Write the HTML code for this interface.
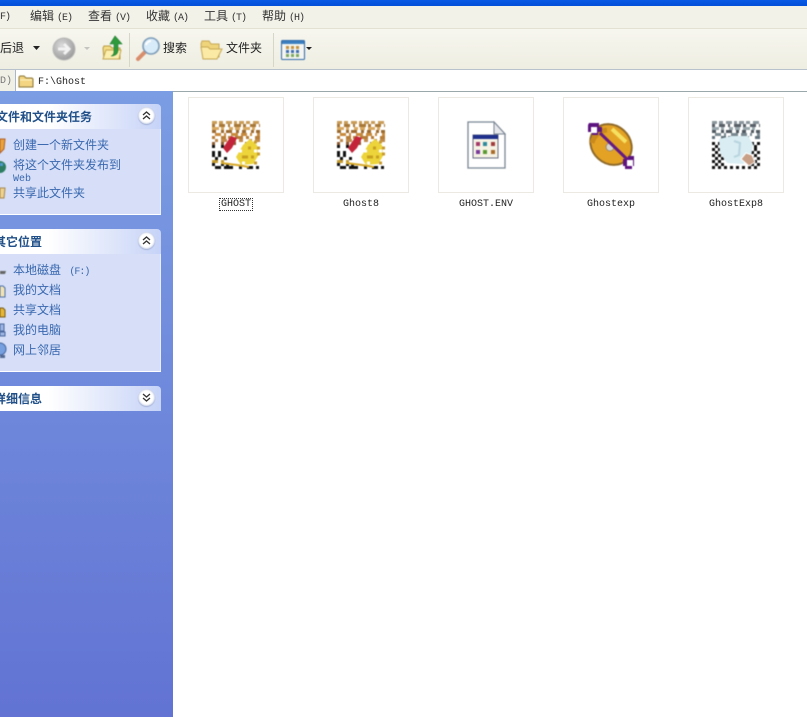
<!DOCTYPE html>
<html lang="zh"><head><meta charset="utf-8"><title>F:\Ghost</title>
<style>
html,body{margin:0;padding:0;width:807px;height:718px;overflow:hidden;background:#fff}
body{position:relative;font:12px/14px "Liberation Sans","Noto Sans CJK SC",sans-serif;color:#222}
.a{position:absolute;white-space:nowrap}
.m{font-family:"Liberation Mono","Noto Sans CJK SC",monospace}
.menu{top:9px;font-size:12px;color:#333}
.menu i{font:10px "Liberation Mono",monospace;margin-left:3px;letter-spacing:-1px}
.tb{top:41px;color:#222}
.panel{position:absolute;left:0;width:161px}
.hd{position:absolute;left:0;width:161px;height:25px;border-radius:0 4px 0 0;background:linear-gradient(90deg,#fff 30%,#c6d3f7)}
.hd span{position:absolute;top:6px;font-weight:bold;font-size:12px;color:#215089;white-space:nowrap}
.bd{position:absolute;left:0;width:160px;background:#d6dff7;border-right:1px solid #e8edfb;border-bottom:1px solid #fff}
.lnk{position:absolute;left:13px;color:#3a68b0;font-size:12px;white-space:nowrap}
.lnk i{font:10px "Liberation Mono",monospace;letter-spacing:-1px}
.btn{position:absolute;left:138px;width:17px;height:17px;border-radius:50%;background:#fff;box-shadow:0 0 2px #8da0cc inset,0 1px 1px #a8b4d8}
.tile{position:absolute;top:97px;width:94px;height:94px;border:1px solid #ece9e2;background:#fff}
.lab{position:absolute;top:198px;width:96px;text-align:center;font:10px/14px "Liberation Mono",monospace;color:#222}
svg{position:absolute;overflow:visible}
svg.s{filter:blur(.4px)}
</style></head><body>

<div class="a" style="left:0;top:0;width:807px;height:6px;background:linear-gradient(#0a5ae6,#0350d8)"></div>
<div class="a" style="left:0;top:6px;width:807px;height:23px;background:#f3f2e8"></div>
<div class="a" style="left:0;top:28px;width:807px;height:1px;background:#e3e1d2"></div>
<div class="a" style="left:0;top:29px;width:807px;height:40px;background:linear-gradient(#f7f6ef,#efeee2)"></div>
<div class="a" style="left:0;top:69px;width:807px;height:1px;background:#b8c2cc"></div>
<div class="a" style="left:0;top:70px;width:15px;height:21px;background:#f1f0e6"></div>
<div class="a" style="left:15px;top:70px;width:792px;height:21px;background:#fff;border-left:1px solid #a9b7c9;box-sizing:border-box"></div>
<div class="a" style="left:173px;top:91px;width:634px;height:1px;background:#9aa8ac"></div>

<div class="a menu m" style="left:0"><i style="margin:0">F)</i></div>
<div class="a menu" style="left:30px">编辑<i>(E)</i></div>
<div class="a menu" style="left:88px">查看<i>(V)</i></div>
<div class="a menu" style="left:146px">收藏<i>(A)</i></div>
<div class="a menu" style="left:204px">工具<i>(T)</i></div>
<div class="a menu" style="left:262px">帮助<i>(H)</i></div>

<div class="a tb" style="left:0">后退</div>
<svg style="left:33px;top:46px" width="8" height="5"><path d="M0 0h7l-3.500 4z" fill="#222"/></svg>
<svg class="s" style="left:52px;top:37px" width="24" height="24" viewBox="0 0 24 24">
<defs><radialGradient id="gb" cx=".4" cy=".35" r=".7"><stop offset="0" stop-color="#dcdcdc"/><stop offset="1" stop-color="#989898"/></radialGradient></defs>
<circle cx="12" cy="12" r="11" fill="url(#gb)" stroke="#b5b5b5"/>
<path d="M6 12h10M12 7l5 5-5 5" fill="none" stroke="#f2f2f2" stroke-width="3"/></svg>
<svg style="left:84px;top:47px" width="7" height="4"><path d="M0 0h6l-3 3z" fill="#c4c4c0"/></svg>
<svg class="s" style="left:101px;top:35px" width="23" height="26" viewBox="0 0 23 26">
<path d="M2 13l1-2h6l2 2h8v11H3z" fill="#f4dc84" stroke="#b79b43"/>
<path d="M2 24l3-9h15l-2 9z" fill="#fbeeae" stroke="#c4a750"/>
<path d="M14 1l7 8h-4v6c0 4-3 6-7 6 3-1 3-3 3-6V9H9z" fill="#2f9a3c" stroke="#1f7a2c" stroke-width=".6"/>
</svg>
<div class="a" style="left:129px;top:33px;width:1px;height:34px;background:#d8d6c6"></div>
<svg class="s" style="left:135px;top:36px" width="26" height="26" viewBox="0 0 26 26">
<path d="M10 16L3 23" stroke="#d88d6c" stroke-width="4" stroke-linecap="round"/>
<circle cx="16" cy="10" r="8" fill="#d8ebf8" stroke="#7d9cb8" stroke-width="1.600"/>
<path d="M11 9a5 5 0 0 1 5-4" stroke="#fff" stroke-width="2" fill="none"/></svg>
<div class="a tb" style="left:163px">搜索</div>
<svg class="s" style="left:199px;top:38px" width="24" height="23" viewBox="0 0 24 23">
<path d="M2 6l1-3h7l2 3h8v13H4z" fill="#f0d47c" stroke="#c6a852"/>
<path d="M4 21L2 9h7l2 2h12l-5 10z" fill="#fbeaa5" stroke="#c6a852"/></svg>
<div class="a tb" style="left:226px">文件夹</div>
<div class="a" style="left:273px;top:33px;width:1px;height:34px;background:#d8d6c6"></div>
<svg class="s" style="left:281px;top:40px" width="24" height="20" viewBox="0 0 24 20">
<rect x=".5" y=".5" width="23" height="19" rx="1" fill="#f4f4f0" stroke="#2d6aa8"/>
<rect x="1" y="1" width="22" height="3" fill="#3c7fc0"/>
<path d="M5 6h3v3H5zM10 6h3v3h-3zM15 6h3v3h-3z" fill="#c8913c"/>
<path d="M5 10h3v3H5zM10 10h3v3h-3zM15 10h3v3h-3z" fill="#3d6cb0"/>
<path d="M5 14h3v3H5zM10 14h3v3h-3zM15 14h3v3h-3z" fill="#7aa860"/></svg>
<svg style="left:306px;top:47px" width="7" height="4"><path d="M0 0h6l-3 3z" fill="#222"/></svg>

<div class="a m" style="left:0;top:75px;font-size:10px;color:#777">D)</div>
<svg class="s" style="left:18px;top:75px" width="16" height="13" viewBox="0 0 16 13">
<path d="M1 12V2l1-1h4l2 2h6l1 1v8z" fill="#f3d582" stroke="#8b7434"/><path d="M2 5h12" stroke="#fff3c4"/></svg>
<div class="a m" style="left:38px;top:76px;font-size:10px;color:#222">F:\Ghost</div>

<div class="a" style="left:0;top:91px;width:173px;height:626px;background:linear-gradient(#7b9de3,#6273d3)"></div>

<div class="hd" style="top:104px"><span style="left:-4px">文件和文件夹任务</span></div>
<div class="bd" style="top:129px;height:85px"></div>
<div class="btn" style="top:107px"></div>
<svg style="left:142px;top:111px" width="9" height="9"><path d="M1 4l3.500-3L8 4M1 8l3.500-3L8 8" fill="none" stroke="#333" stroke-width="1.300"/></svg>
<div class="lnk" style="top:138px">创建一个新文件夹</div>
<div class="lnk" style="top:158px">将这个文件夹发布到</div>
<div class="lnk" style="top:171px;line-height:13px"><i style="letter-spacing:0">Web</i></div>
<div class="lnk" style="top:186px">共享此文件夹</div>
<svg class="s" style="left:0;top:138px" width="6" height="62" viewBox="0 0 6 62">
<path d="M0 1h5l-1 10-4 4z" fill="#e9a43a" stroke="#b45f2a"/>
<circle cx="0" cy="29" r="6" fill="#2c7d62"/><path d="M0 25h3v3H0z" fill="#4f9bd3"/>
<path d="M0 50h5l-1 10H0z" fill="#eed28d" stroke="#a88650"/></svg>

<div class="hd" style="top:229px"><span style="left:-6px">其它位置</span></div>
<div class="bd" style="top:254px;height:117px"></div>
<div class="btn" style="top:232px"></div>
<svg style="left:142px;top:236px" width="9" height="9"><path d="M1 4l3.500-3L8 4M1 8l3.500-3L8 8" fill="none" stroke="#333" stroke-width="1.300"/></svg>
<div class="lnk" style="top:263px">本地磁盘 <i>&nbsp;(F:)</i></div>
<div class="lnk" style="top:283px">我的文档</div>
<div class="lnk" style="top:303px">共享文档</div>
<div class="lnk" style="top:323px">我的电脑</div>
<div class="lnk" style="top:343px">网上邻居</div>
<svg class="s" style="left:0;top:266px" width="6" height="94" viewBox="0 0 6 94">
<path d="M0 5h6l-1 3H0z" fill="#666"/>
<path d="M0 20h3l2 2v9H0z" fill="#f2e3b2" stroke="#4f6ea8"/>
<path d="M0 42h3l2 2v7H0z" fill="#e7b633" stroke="#7a5a18"/>
<path d="M0 58h4v7H0zM0 66h5v4H0z" fill="#9db6e4" stroke="#4a659d"/>
<circle cx="0" cy="83" r="6" fill="#76a0e0" stroke="#44639d"/><path d="M0 89h5v3H0z" fill="#556b96"/></svg>

<div class="hd" style="top:386px"><span style="left:-6px">详细信息</span></div>
<div class="btn" style="top:389px"></div>
<svg style="left:142px;top:393px" width="9" height="9"><path d="M1 1l3.500 3L8 1M1 5l3.500 3L8 5" fill="none" stroke="#333" stroke-width="1.300"/></svg>

<div class="tile" style="left:188px"></div>
<div class="tile" style="left:313px"></div>
<div class="tile" style="left:438px"></div>
<div class="tile" style="left:563px"></div>
<div class="tile" style="left:688px"></div>

<svg width="0" height="0" style="left:0;top:0"><defs>
<g id="gh" fill="none" stroke-width="3">
<path d="M0 1.500h48" stroke="#c99c58" stroke-dasharray="5 2 4 3 6 2 3 2"/>
<path d="M0 4.500h48" stroke="#a87838" stroke-dasharray="3 4 6 3 2 4 7 2"/>
<path d="M0 7.500h48" stroke="#d9a860" stroke-dasharray="7 2 3 5 4 2 5 3"/>
<path d="M0 10.500h48" stroke="#9c6a30" stroke-dasharray="4 5 3 2 6 4 3 3"/>
<path d="M3 13.500h45" stroke="#c88a3c" stroke-dasharray="6 3 2 5 7 3"/>
<path d="M0 16.500h48" stroke="#b67c38" stroke-dasharray="3 6 5 2 3 4 8 3"/>
<path d="M3 19.500h45" stroke="#c08a4c" stroke-dasharray="3 3 6 4 5 3 4 6"/>
<path d="M0 22.500h48" stroke="#8a5a30" stroke-dasharray="3 6 3 9 3 9 6 9"/>
<path d="M0 25.500h24" stroke="#111" stroke-dasharray="3 6 3 3"/>
<path d="M0 31.500h15" stroke="#111" stroke-dasharray="3 3 3 6"/>
<path d="M3 37.500h12" stroke="#111" stroke-dasharray="3 6"/>
<path d="M0 34.500h9" stroke="#111" stroke-dasharray="3 3"/>
<path d="M0 40.500h12" stroke="#c49a30" stroke-dasharray="6 3"/>
<path d="M0 43.500h20" stroke="#111" stroke-dasharray="3 6 3 2"/>
<path d="M3 46.500h45" stroke="#111" stroke-dasharray="6 3 9 6 3 5 6 3 3 3"/>
<path d="M9 42l16 2 12 2" stroke="#d7a828" stroke-width="2"/>
<path d="M11 27l8-12 6 2-5 10-5 5z" fill="#c4243a" stroke="none"/>
<path d="M24 36l7-12 7-6 7 6 1 11-5 8-12 1z" fill="#ecd43a" stroke="none"/>
<path d="M27 30h3M42 30h3M30 42h3" stroke="#fff"/>
<path d="M30 36h6M36 27h3M39 36h3" stroke="#c8a020"/>
<path d="M42 21h6M45 27h3M45 33h3M42 42h6" stroke="#c79a30" stroke-dasharray="3 3"/>
</g></defs></svg>

<svg class="s" style="left:212px;top:121px" width="48" height="48" viewBox="0 0 48 48"><use href="#gh"/></svg>
<svg class="s" style="left:337px;top:121px" width="48" height="48" viewBox="0 0 48 48"><use href="#gh"/></svg>

<svg class="s" style="left:467px;top:121px" width="40" height="49" viewBox="0 0 40 49">
<path d="M1 1h26l11 12v34H1z" fill="#fff" stroke="#7a8694" stroke-width="1.300"/>
<path d="M27 1v12h11z" fill="#e6e8ec" stroke="#7a8694"/>
<rect x="6" y="14" width="25" height="23" fill="#f6f2e4" stroke="#6a6f86"/>
<rect x="6" y="14" width="25" height="4" fill="#1f2f8c"/>
<path d="M9 21h4v4H9z" fill="#a53a6a"/><path d="M16 21h4v4h-4z" fill="#2c8a9c"/><path d="M24 21h4v4h-4z" fill="#a23c3c"/>
<path d="M9 29h4v4H9z" fill="#7a3a9c"/><path d="M16 29h4v4h-4z" fill="#5a9a30"/><path d="M24 29h4v4h-4z" fill="#a86c28"/>
</svg>

<svg class="s" style="left:586px;top:120px" width="50" height="50" viewBox="0 0 50 50">
<ellipse cx="25" cy="24.500" rx="22" ry="19" transform="rotate(42 25 24.500)" fill="#e4a224" stroke="#8f6a2a" stroke-width="2"/>
<path d="M6 23a17 17 0 0 1 15-13" stroke="#c98a1c" stroke-width="5" fill="none"/>
<path d="M26 9l14 13" stroke="#f6e060" stroke-width="4"/>
<circle cx="24" cy="27" r="4" fill="#d8d4cc" stroke="#9a8a70"/>
<path d="M14 13l32 31" stroke="#641a82" stroke-width="3"/>
<path d="M3 3h10v4h3v5h-4v3H6v-3H2V5z" fill="#5e1480"/><rect x="5" y="7" width="6" height="6" fill="#fff"/>
<path d="M37 39h5v-3h6v10h-2v3H39v-3h-2z" fill="#5e1480"/><rect x="41" y="40" width="6" height="6" fill="#fff"/>
</svg>

<svg class="s" style="left:712px;top:121px" width="48" height="48" viewBox="0 0 48 48" fill="none" stroke-width="3">
<path d="M0 1.500h48" stroke="#8a959c" stroke-dasharray="5 2 4 3 6 2 3 2"/>
<path d="M0 4.500h48" stroke="#5a6068" stroke-dasharray="3 4 6 3 2 4 7 2"/>
<path d="M0 7.500h48" stroke="#9aa8ae" stroke-dasharray="7 2 3 5 4 2 5 3"/>
<path d="M0 10.500h48" stroke="#505860" stroke-dasharray="4 5 3 2 6 4 3 3"/>
<path d="M3 13.500h45" stroke="#7a8890" stroke-dasharray="6 3 2 5 7 3"/>
<path d="M0 16.500h48" stroke="#60707a" stroke-dasharray="3 6 5 2 3 4 8 3"/>
<path d="M0 22.500h9M3 25.500h9M0 28.500h9M3 31.500h9M0 34.500h12M3 37.500h9M0 40.500h9M3 43.500h9M0 46.500h48" stroke="#111" stroke-dasharray="3 3"/>
<path d="M39 22.500h9M42 25.500h6M42 28.500h6M39 31.500h9M42 34.500h6M39 37.500h9M42 40.500h6M39 43.500h9" stroke="#111" stroke-dasharray="3 3"/>
<path d="M7 18l13-3 16 0 5 8-2 13-8 7-16-1-7-10z" fill="#d9edf3" stroke="none"/>
<path d="M22 20l6 2-1 12-5 2" stroke="#b8d4de" stroke-width="2"/>
<path d="M29 38l5-6 6 2 3 7-6 4z" fill="#c8a088" stroke="#fff" stroke-width="1"/>
</svg>

<div class="lab" style="left:188px"><span style="border:1px dotted #333;padding:0 1px">GHOST</span></div>
<div class="lab" style="left:313px">Ghost8</div>
<div class="lab" style="left:438px">GHOST.ENV</div>
<div class="lab" style="left:563px">Ghostexp</div>
<div class="lab" style="left:688px">GhostExp8</div>

</body></html>
